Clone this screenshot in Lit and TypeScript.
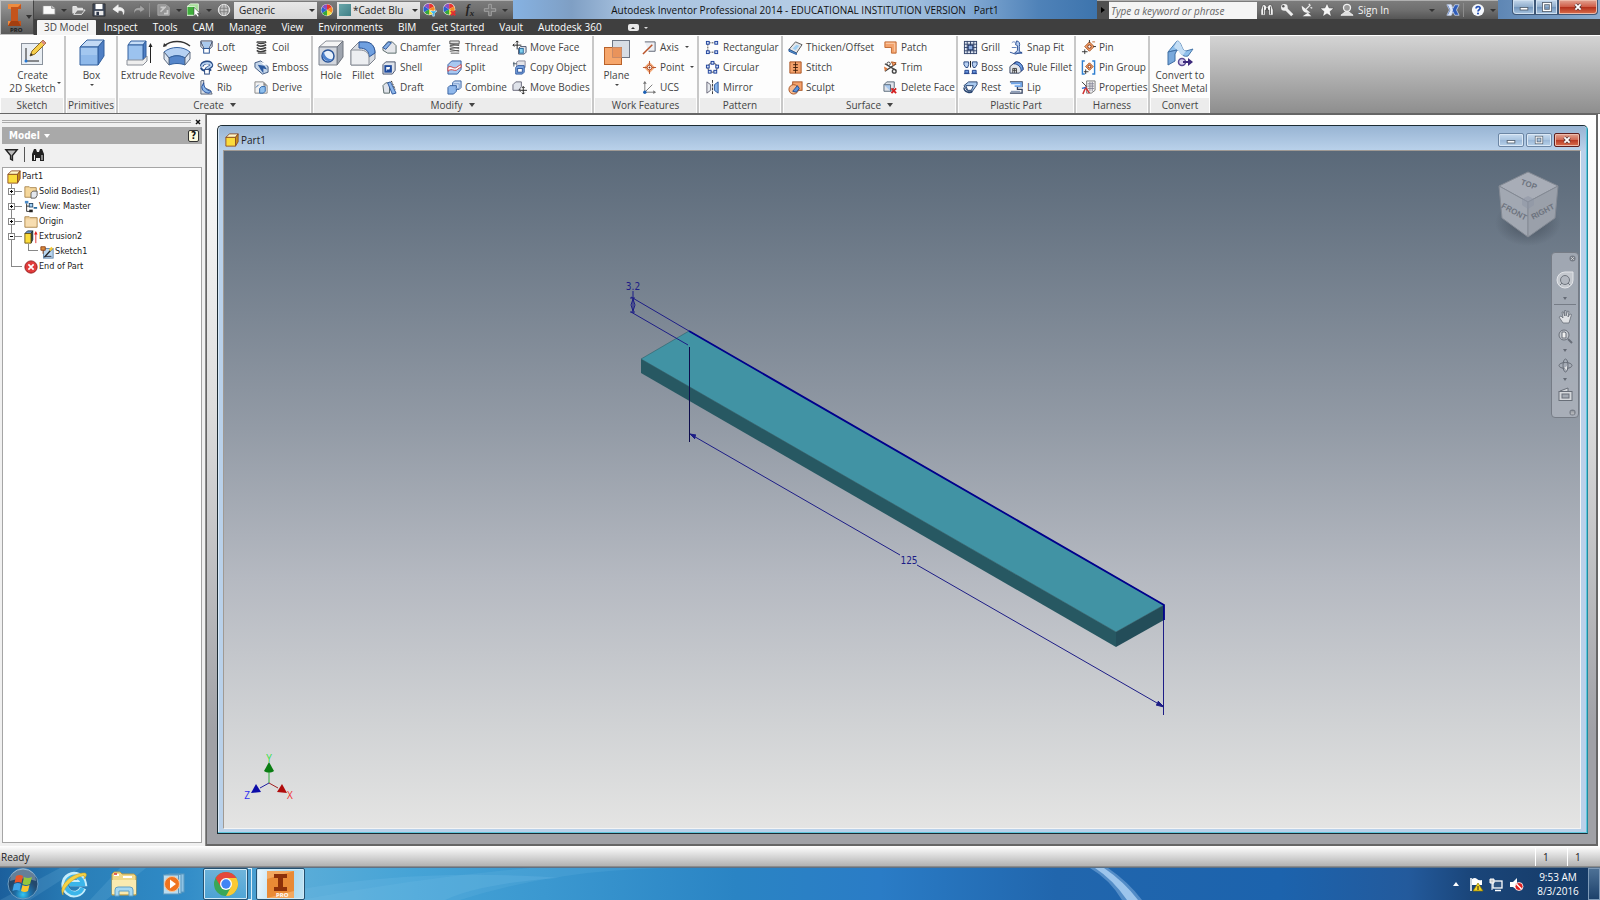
import { LitElement, html, svg, css, nothing, TemplateResult } from "lit";
import { customElement } from "lit/decorators.js";
import { classMap } from "lit/directives/class-map.js";

type Art = TemplateResult;

/* ---------- 16px ribbon glyphs ---------- */
const small: Record<string, Art> = {
  loft: svg`<path d="M2 1h12v6l-3 3H5L2 7z" fill="#e4e8ee" stroke="#33415f"/><path d="M2 2l4 8M14 2l-4 8" stroke="#33415f"/><path d="M3 2h10l-3 7H6z" fill="#a9c9ee"/><rect x="5" y="9" width="6" height="5" fill="#fff" stroke="#1f4b8e"/>`,
  sweep: svg`<path d="M3 7c0-5 9-6 10-2 1 3-5 3-5 5" fill="none" stroke="#274b86" stroke-width="4"/><path d="M3 7c0-4 8-5 10-2 1 2-5 3-5 5" fill="none" stroke="#b5d0f0" stroke-width="2"/><path d="M2 8c1 4 7 5 11 2" fill="none" stroke="#274b86" stroke-width="2"/><rect x="6" y="10" width="5" height="5" fill="#fff" stroke="#1f3f7a"/>`,
  rib: svg`<path d="M2 1l3-1v8l7 3 2 4H2z" fill="#d9dde4" stroke="#5a6478"/><path d="M5 3c0 5 3 8 8 9l-2 2c-5 0-8-3-8-7z" fill="#8db8ea" stroke="#1f4b9a"/>`,
  coil: svg`<g fill="none" stroke="#3f3f3f" stroke-width="1.8"><path d="M3 2c3 3 8 1 10 0M3 5c3 3 8 1 10 0M3 8c3 3 8 1 10 0M3 11c3 3 8 1 10 0"/><path d="M3 2h9M4 14h9" stroke="#777"/></g>`,
  emboss: svg`<path d="M1 3l6-2 8 6v6l-6 2-8-7z" fill="#c5d6ea" stroke="#3b557f"/><path d="M4 5l7 1 3 4-4-1v5L7 10z" fill="#2c5a9f"/><path d="M7 2l4 1 3 3-4-1z" fill="#fff"/>`,
  derive: svg`<path d="M1 2h9l4 4v8H1z" fill="#f1f1f1" stroke="#888"/><path d="M10 2l4 4h-4z" fill="#8a8a8a"/><path d="M6 9l2-2h4v5l-2 2H6z" fill="#8fc0ee" stroke="#2e64a6"/><path d="M2 8l3-3" stroke="#2e64a6"/>`,
  chamfer: svg`<path d="M1 8l5-6h5l4 4v8H6l-5-3z" fill="#e4e6ea" stroke="#566"/><path d="M1 8l6-6 3 1-6 7z" fill="#86b0e6" stroke="#2b549b"/>`,
  shell: svg`<path d="M1 5l3-3h10v9l-3 4H1z" fill="#dfe3ea" stroke="#45506a"/><rect x="3.5" y="6.5" width="6" height="6" fill="#fff" stroke="#1f4b9e" stroke-width="2"/><path d="M5 11h4V9" stroke="#1f4b9e" stroke-width="2" fill="none"/>`,
  draft: svg`<path d="M1 6l3-3h4v11H2z" fill="#dfe3ea" stroke="#566"/><path d="M6 3l3-1 6 12-4 1z" fill="#8bb5ea" stroke="#2b549b"/><path d="M10 1l4 9" stroke="#222" stroke-dasharray="2 1"/>`,
  thread: svg`<g stroke="#555" fill="none"><path d="M3 1h10v3H3z" fill="#ddd"/><path d="M3 4l10 2M3 7l10 2M3 10l10 2M3 6l10-1M3 9l10-1M3 12l10-1M4 14h9"/></g>`,
  split: svg`<path d="M1 5l4-4h10v9l-4 5H1z" fill="#a8c8f0" stroke="#2f5b9f"/><path d="M1 8c3-3 6 2 9 0s4-3 5-3v3c-3 0-4 4-7 3s-5-1-7 1z" fill="#fff" stroke="#d23c3c"/>`,
  combine: svg`<path d="M6 3l2-2h7v7l-2 2H6z" fill="#c9dcf5" stroke="#35609f"/><path d="M1 8l2-2h7v6l-3 3H1z" fill="#8fb8ec" stroke="#35609f"/><path d="M7 4h6v5H9" fill="none" stroke="#7d9fd0"/>`,
  moveface: svg`<path d="M5.5 1v9M1 5.5h9M4 2.5L5.5 1 7 2.5M2.5 4L1 5.5 2.5 7" stroke="#222" fill="none"/><path d="M7 9l2-2h6v6l-2 2H7z" fill="#e4e8ee" stroke="#45506a"/><rect x="8" y="9" width="4" height="5" fill="#7fd0ee" stroke="#2a6da0"/>`,
  copy: svg`<path d="M5 2l2-1h7v7l-2 1H5z" fill="#e4e4e8" stroke="#889"/><path d="M1 4h4M2 2v5" stroke="#456"/><path d="M4 8l2-2h7v7l-2 2H4z" fill="#7fa9e4" stroke="#2b549b"/><rect x="6" y="9" width="5" height="4" fill="#fff" stroke="#2b549b"/>`,
  movebody: svg`<path d="M1 5l3-3h6v5l-3 4H1z" fill="#dfe3ea" stroke="#667"/><path d="M12 7v8M8 11h8" stroke="#222"/><path d="M10.5 8.5L12 7l1.5 1.5M10.5 13.5L12 15l1.5-1.5M9 9.5L7.5 11 9 12.5" stroke="#222" fill="none"/>`,
  axis: svg`<path d="M3 2h11v10H7" fill="#eceff4" stroke="#5b6270"/><path d="M1 15L11 5" stroke="#b9542b" stroke-width="1.6"/>`,
  point: svg`<path d="M8 2l6 6-6 6-6-6z" fill="#f2a878"/><path d="M8 1v14M1 8h14" stroke="#b9542b"/><circle cx="8" cy="8" r="2.5" fill="#fff" stroke="#b9542b"/><circle cx="8" cy="8" r="1" fill="#7c2d10"/>`,
  ucs: svg`<path d="M3 13V2M3 13h11M3 13l8-8" stroke="#777" fill="none"/><path d="M1 4l2-3 2 3zM12 11l3 2-3 2z" fill="#777"/><circle cx="3" cy="13" r="1.8" fill="#1a5fb4"/>`,
  rect: svg`<path d="M4 3h8M4 13h8M3 4v8" stroke="#444" stroke-dasharray="2 1"/><g fill="#cfe0f8" stroke="#1c3f9a"><rect x="1.5" y="1.5" width="3" height="3"/><rect x="10.5" y="1.5" width="3" height="3"/><rect x="1.5" y="11.5" width="3" height="3"/><rect x="10.5" y="11.5" width="3" height="3"/></g>`,
  circ: svg`<circle cx="8" cy="8" r="5" fill="none" stroke="#333"/><g fill="#cfe0f8" stroke="#1c3f9a"><rect x="6.5" y="1.5" width="3" height="3"/><rect x="11.5" y="5.5" width="3" height="3"/><rect x="9.5" y="11" width="3" height="3"/><rect x="3.5" y="11" width="3" height="3"/><rect x="1.5" y="5.5" width="3" height="3"/></g>`,
  mirror: svg`<path d="M2 2l4 3v6l-4 3z" fill="#e6e9ee" stroke="#667"/><path d="M8 0v16" stroke="#333" stroke-dasharray="3 1"/><path d="M14 2l-4 3v6l4 3z" fill="#86b4ea" stroke="#2b549b"/>`,
  thicken: svg`<path d="M1 10l7-8 7 3-6 9z" fill="#e3e6ea" stroke="#555"/><path d="M1 10l8 4v1.5L1 12z" fill="#5da2e0" stroke="#27589a"/><path d="M5 9l4-4 3 1-4 5z" fill="#9fd0f4"/>`,
  stitch: svg`<path d="M2 2h12v12H2z" fill="#f3a26c" stroke="#a7511f"/><path d="M8 2v12" stroke="#5a2a0c"/><path d="M5.5 5h5M5.5 8h5M5.5 11h5" stroke="#3b1c08"/>`,
  sculpt: svg`<rect x="5" y="2" width="10" height="9" fill="#f3a26c" stroke="#a7511f"/><circle cx="6" cy="10" r="5" fill="#f7b98d" stroke="#a7511f"/><path d="M5 12l5-6 2 3-3 4z" fill="#5b93dc" stroke="#1f4b8e"/>`,
  patch: svg`<path d="M2 2h12v12H9V8H2z" fill="#f3a26c" stroke="#c06a33"/><path d="M3 3.5h9.5v9" fill="none" stroke="#fbd2b2"/>`,
  trim: svg`<path d="M2 4l12 7M2 12l12-8" stroke="#444" stroke-width="1.5"/><path d="M1 7l4 2-3 3z" fill="#e07b3d"/><circle cx="12" cy="12" r="2" fill="none" stroke="#444" stroke-width="1.5"/><circle cx="6" cy="4" r="1.8" fill="none" stroke="#444"/><path d="M9 2l5 1-3 3z" fill="#f3a26c" stroke="#a7511f"/>`,
  delface: svg`<path d="M1 5l3-3h8v6l-3 4H1z" fill="#dfe3ea" stroke="#567"/><path d="M1 5h7v7" fill="#a9c9ee" stroke="#567"/><path d="M9 9l5 5M14 9l-5 5" stroke="#d41f1f" stroke-width="2"/>`,
  grill: svg`<rect x="1.5" y="1.5" width="13" height="13" fill="#dfe6f2" stroke="#34466c"/><path d="M4.5 1v14M8 1v14M11.5 1v14M1 4.5h14M1 8h14M1 11.5h14" stroke="#34466c"/><rect x="5.5" y="5.5" width="5" height="5" fill="#8fb0e4" stroke="#182c5c"/>`,
  boss: svg`<path d="M1 2h5v3l-1 3H3L1 5zM10 2h5v3l-2 3h-2l-1-3z" fill="#b9d1f2" stroke="#25457f"/><path d="M8 1v7" stroke="#111"/><path d="M2 14v-3h4v3zM10 14v-3h4v3z" fill="#6f9ce0" stroke="#1f3f8a"/><path d="M1 14.5h6M9 14.5h6" stroke="#1f3f8a"/>`,
  rest: svg`<path d="M1 6l5-4h9v3l-5 7H5z" fill="#a9c9ee" stroke="#27436f"/><path d="M3 6h8l-2 5H5z" fill="#fff" stroke="#27436f"/><path d="M1 8c0 5 7 7 9 4" fill="none" stroke="#27436f" stroke-width="1.5"/>`,
  snap: svg`<path d="M8 1c3 0 4 3 3 6v5l3 2H6l3-3V6L7 5z" fill="#b5cdf0" stroke="#2b4f94"/><path d="M3 8h5M3 3c2-2 4-1 4 1" stroke="#5d7db8" fill="none"/><path d="M1 13l6 2 7-2" stroke="#2b4f94" fill="none"/>`,
  rulef: svg`<path d="M1 14V7l6-5c5 0 8 4 8 8l-4 4z" fill="#e3e6ea" stroke="#33415f"/><path d="M5 4l3-2c4 0 7 4 7 8l-2 2c0-4-3-8-8-8z" fill="#6f9fe0" stroke="#1f3f8a"/><path d="M4 14V9h4v5M6 9v5M4 11h4" stroke="#444" fill="none"/>`,
  lip: svg`<path d="M1 2h13v5H9v3h5v4H1" fill="none" stroke="#33415f" stroke-width="1.4"/><path d="M2 3.5h11v3H6" fill="none" stroke="#6fa4e6" stroke-width="2"/><path d="M2 12.5h10" stroke="#8b9bb5" stroke-width="2"/>`,
  pin: svg`<path d="M9 2l5 5-5 5-5-5z" fill="#f3a26c" stroke="#a7511f"/><circle cx="9" cy="7" r="1.8" fill="#fff" stroke="#7c2d10"/><path d="M9 0v3M13 7h3M4 10v5M1 12.5h6" stroke="#333"/><path d="M12 2h3" stroke="#c06a33"/>`,
  pingroup: svg`<path d="M4 1H1.5v14H4M12 1h2.5v14H12" fill="none" stroke="#2f7fd0" stroke-width="1.5"/><path d="M9 3l4 4-4 4-4-4z" fill="#f3a26c" stroke="#a7511f"/><circle cx="9" cy="7" r="1.4" fill="#fff" stroke="#7c2d10"/><path d="M5 10v5M3 12.5h5" stroke="#333"/>`,
  props: svg`<path d="M6 1h9v10l-4 3H6z" fill="#f4f4f4" stroke="#777"/><path d="M7 4h7M7 6.5h7M7 9h7M9.5 2v10M12 2v10" stroke="#889"/><path d="M1 2l5 5" stroke="#333"/><path d="M2 15l3-7 4 6" stroke="#d02f2f" stroke-width="1.6" fill="none"/><path d="M1 9l4-1" stroke="#2f6fd0" stroke-width="1.5"/>`,
};

/* ---------- 28px ribbon glyphs ---------- */
const large: Record<string, Art> = {
  sketch: svg`<rect x="2.5" y="4.5" width="21" height="21" fill="#e9eef3" stroke="#8a929c"/><path d="M7 9v13h13" fill="none" stroke="#222"/><circle cx="7" cy="22" r="1.5" fill="#2477d4"/><path d="M11 17l2-5L24 1l3 3-11 11z" fill="#f6cf4c" stroke="#8f6a1c"/><path d="M24 1l3 3-2 2-3-3z" fill="#d98a83"/><path d="M11 17l1-3 2 2z" fill="#333"/>`,
  box: svg`<path d="M2 8l7-7h17l-6 7z" fill="#c3daf5" stroke="#33619f"/><path d="M20 8l6-7v16l-6 9z" fill="#4f7fc4" stroke="#33619f"/><path d="M2 8h18v18H2z" fill="#8fb9ea" stroke="#33619f"/><path d="M3 9h16v7H3z" fill="#a3c7f0"/>`,
  extrude: svg`<path d="M3 6l3-4h15l-3 4z" fill="#c6ddf7" stroke="#33619f"/><path d="M18 6l3-4v17l-3 5z" fill="#4f7fc4" stroke="#33619f"/><path d="M3 6h15v16H3z" fill="#9cc3ef" stroke="#33619f"/><path d="M2 21h16l4-4v5l-4 4H2z" fill="#eee" stroke="#8a8f98"/><path d="M25.5 24V6" stroke="#222"/><path d="M23.5 8l2-4 2 4z" fill="#222"/>`,
  revolve: svg`<path d="M1 7C8 1 20 1 27 7" fill="none" stroke="#333" stroke-width="1.4"/><path d="M0 8l1-4 3 3z" fill="#333"/><path d="M1 13c7-6 19-6 26 0l-5 6c-5-3-11-3-16 0z" fill="#b5d1f3" stroke="#33619f"/><path d="M6 19c5-3 11-3 16 0v7c-5-2-11-2-16 0z" fill="#5586ca" stroke="#33619f"/><path d="M1 13l5 6v7l-5-6zM27 13l-5 6v7l5-6z" fill="#dfe7f1" stroke="#5f6d82"/>`,
  hole: svg`<path d="M2 8l7-6h17l-6 6z" fill="#f4f4f4" stroke="#8a8f98"/><path d="M20 8l6-6v16l-6 8z" fill="#9ea4ae" stroke="#6d727c"/><path d="M2 8h18v18H2z" fill="#d3d7de" stroke="#7b818c"/><circle cx="11" cy="17" r="6" fill="#e6f0fb" stroke="#2a5599" stroke-width="1.500"/><path d="M7 12a6 6 0 1 0 9 8c-5 1-9-3-9-8z" fill="#4d82ce"/>`,
  fillet: svg`<path d="M2 11l8-8h6c7 0 10 5 10 11v6l-6 6H2z" fill="#d9dce1" stroke="#7b818c"/><path d="M10 3h6c7 0 10 5 10 11l-6 4c0-6-3-9-10-9z" fill="#6fa0e0" stroke="#2a5599"/><path d="M2 11h8c7 0 10 3 10 8v7H2z" fill="#eceef1" stroke="#8a8f98"/>`,
  plane: svg`<rect x="9.5" y="1.5" width="17" height="17" fill="#d7dde5" stroke="#6d7685"/><rect x="1.5" y="8.5" width="17" height="17" fill="#f59a57" fill-opacity=".88" stroke="#b9622a"/><path d="M9.5 8.5h9v10h-9z" fill="#e9935b" stroke="#c98a67"/>`,
  convert: svg`<path d="M2 13L11 2c5 0 4 10 9 10l7-2-5 7c-7 2-7-6-11-6z" fill="#8fc0ec" stroke="#4a79ab"/><path d="M11 2c5 0 4 10 9 10l-3 4c-4-1-4-5-6-5l-3-3z" fill="#c4def5"/><path d="M2 13l9-2-2 4v7l-7 4z" fill="#79a9dc" stroke="#3f6ea3"/><circle cx="16" cy="23" r="3.5" fill="#d9d2ee" stroke="#5a4a94" stroke-width="1.5"/><path d="M17 23h6" stroke="#3d2b7c" stroke-width="2"/><path d="M22 19l5 4-5 4z" fill="#3d2b7c"/>`,
};

const wheel = svg`<circle cx="8" cy="8" r="7" fill="#eee"/><path d="M8 8V1.5a6.5 6.5 0 0 1 5.6 3.2z" fill="#e8342e"/><path d="M8 8l5.6-3.3a6.5 6.5 0 0 1 0 6.6z" fill="#f08c28"/><path d="M8 8l5.6 3.3A6.5 6.5 0 0 1 8 14.5z" fill="#f2e23a"/><path d="M8 8v6.5a6.5 6.5 0 0 1-5.6-3.2z" fill="#37a83c"/><path d="M8 8l-5.6 3.3a6.5 6.5 0 0 1 0-6.6z" fill="#2a62d0"/><path d="M8 8L2.4 4.7A6.5 6.5 0 0 1 8 1.5z" fill="#8b4fc0"/>`;

/* ---------- title-bar glyphs ---------- */
const bar: Record<string, Art> = {
  new: svg`<path d="M1 3h10l4 3v7H1z" fill="#fafafa" stroke="#777"/><path d="M11 3v3h4" fill="#ccc" stroke="#888"/>`,
  open: svg`<path d="M1 12V4h4l1 2h6v2" fill="#ddd" stroke="#eee"/><path d="M2 13l4-5h9l-4 5z" fill="#777" stroke="#f0f0f0"/>`,
  save: svg`<path d="M1 1h14v14H1z" fill="#3c4658" stroke="#333"/><path d="M4 1h8v6H4z" fill="#fff"/><path d="M3 9h10v5H3z" fill="#e8e8e8"/><path d="M5 10h3v4H5z" fill="#2c3648"/>`,
  undo: svg`<path d="M7 2L1 7l6 4V9c4-1 6 0 6 4 2-5 0-8-6-8z" fill="#f2f2f2" stroke="#f2f2f2" stroke-width=".8"/>`,
  redo: svg`<path d="M9 2l6 5-6 4V9c-4-1-6 0-6 4-2-5 0-8 6-8z" fill="#a4a4a4" stroke="#555" stroke-width=".5"/>`,
  update: svg`<path d="M1 2h9l4 3v9H1z" fill="#949494" stroke="#ababab"/><path d="M4 10l6-6M4 5h3v3M12 8v4H8" fill="none" stroke="#cacaca" stroke-width="2"/>`,
  select: svg`<path d="M0 4l4-3h9v8l-4 5H0z" fill="#a8e09a" stroke="#e4f6de"/><path d="M0 4h9v10H0z" fill="#3fae3c" stroke="#e4f6de"/><path d="M8 5v10l2-2 2 3 2-1-2-3h3z" fill="#fff" stroke="#333" stroke-width=".6"/>`,
  globe: svg`<circle cx="8" cy="8" r="6.5" fill="#c4c4c4" stroke="#f2f2f2"/><path d="M3 6h10M3 10h10M8 2v12M5 3c-2 3-2 7 0 10M11 3c2 3 2 7 0 10" stroke="#7d7d7d" fill="none"/>`,
  wheel,
  wheelAdd: svg`<g transform="translate(-1 -1)">${wheel}</g><path d="M8 9h8l-3 3v3h-2v-3z" fill="#35b2ea" stroke="#fff" stroke-width=".6"/>`,
  wheelDel: svg`<g transform="translate(-1 -1)">${wheel}</g><path d="M9 9l5 5M14 9l-5 5" stroke="#e03030" stroke-width="2.4"/>`,
  plus: svg`<path d="M6.5 1.5h3v5h5v3h-5v5h-3v-5h-5v-3h5z" fill="#777" stroke="#a8a8a8"/>`,
  binoc: svg`<path d="M1 8l2-6h3l1 2h2l1-2h3l2 6v6h-5V8H6v6H1z" fill="#f2f2f2" stroke="#333" stroke-width=".6"/><path d="M4 4v9M12 4v9" stroke="#555"/><path d="M7 5h2v3H7z" fill="#444"/>`,
  key: svg`<circle cx="5" cy="5" r="3.8" fill="#eee"/><path d="M6 6l8 8" stroke="#eee" stroke-width="3.5"/><circle cx="3.8" cy="3.8" r="1.4" fill="#555"/>`,
  dish: svg`<path d="M2 3c0 7 4 9 10 8z" fill="#f2f2f2"/><path d="M6 8l5-5M12 5l2 1M10 1l2 2" stroke="#eee" stroke-width="1.5"/><path d="M3 15h10l-4-4z" fill="#f2f2f2"/>`,
  star: svg`<path d="M8 0l2.300 5.500L16 6l-4.500 3.700L13 15.500l-5-3.200-5 3.200 1.500-5.800L0 6l5.700-.5z" fill="#f5f5f5" stroke="#444" stroke-width=".6"/>`,
  person: svg`<circle cx="8" cy="5.5" r="4" fill="#999" stroke="#f2f2f2" stroke-width="1.5"/><path d="M1 14h14l-5-4H6z" fill="#ddd" stroke="#f2f2f2"/>`,
  exchange: svg`<path d="M1 2h5l2 4 2-4h5l-3 6 3 6h-5l-2-4-2 4H1l3-6z" fill="#2f5cb8" stroke="#dfe8f8" stroke-width=".8"/><path d="M2 2h4l2 6-2 6H2l3-6z" fill="#dfe8f8"/>`,
  help: svg`<circle cx="8" cy="8" r="7" fill="#f6f8fb"/><path d="M5.8 6.3c0-3 4.6-3 4.6-.3C10.4 7.7 8 7.6 8 9.6" fill="none" stroke="#2450b5" stroke-width="2"/><circle cx="8" cy="12" r="1.2" fill="#2450b5"/>`,
};

/* ---------- browser tree glyphs ---------- */
const tree: Record<string, Art> = {
  part: svg`<path d="M1 5l4-4h10l-3 4z" fill="#fff6c8" stroke="#8a4a22"/><path d="M12 5l3-4v9l-3 5z" fill="#c98f1a" stroke="#8a4a22"/><path d="M1 5h11v10H1z" fill="#fbdc3c" stroke="#8a4a22"/>`,
  bodies: svg`<path d="M1 2h5l1 1h7v11H1z" fill="#f5d79b" stroke="#a88349"/><path d="M8 9l2-2h5v5l-2 3H8z" fill="#e4e8ee" stroke="#555"/>`,
  view: svg`<rect x="1" y="1" width="4" height="3" fill="#4a8bc8"/><path d="M3 4v9h5M3 7h4" stroke="#222" fill="none"/><rect x="6" y="4" width="4" height="4" fill="#9fd0f4" stroke="#246"/><rect x="6" y="11" width="4" height="3" fill="#222"/><path d="M11 9h4" stroke="#2a6da0" stroke-width="2"/>`,
  folder: svg`<path d="M1 2h5l1 1h8v11H1z" fill="#f0d09a" stroke="#a88349"/><path d="M2 5h12v8H2z" fill="#f7ddb0"/>`,
  extrusion: svg`<path d="M1 4l3-3h6l-2 3z" fill="#6d95c4" stroke="#234"/><path d="M8 4l2-3v10l-2 4z" fill="#245" stroke="#233"/><path d="M1 4h7v11H1z" fill="#fbdc3c" stroke="#6b5410"/><path d="M13.5 15V3" stroke="#d22"/><path d="M11.5 5l2-4 2 4z" fill="#d22"/>`,
  sketch: svg`<rect x="4" y="4" width="11" height="11" fill="#b9d6f0" stroke="#5d82a8"/><path d="M5 14L14 4" stroke="#222" stroke-width="1.5"/><path d="M1 2h5v4H1zM3.5 6v4" fill="#d98b3c" stroke="#8a3d12"/><path d="M10 5l3-3 2 2-3 3z" fill="#f2c93a"/><path d="M6 13h7" stroke="#223"/>`,
  end: svg`<circle cx="8" cy="8" r="7" fill="#e23b3b" stroke="#8f1717"/><path d="M5 5l6 6M11 5l-6 6" stroke="#fff" stroke-width="2"/>`,
  filter: svg`<path d="M2 3h12l-5 6v5l-2-1V9z" fill="#bbb" stroke="#222" stroke-width="1.5"/>`,
  binoc: svg`<path d="M2 7l2-5h2l1 3h2l1-3h2l2 5v7h-4v-3H6v3H2z" fill="#222"/><path d="M4.5 8v5M12 8v5" stroke="#eee"/>`,
};

const icon = (body: Art, size: number, box = size) =>
  html`<svg class="ic" width=${size} height=${size} viewBox="0 0 ${box} ${box}" aria-hidden="true">${body}</svg>`;

interface Big { art: string; text: string[]; caret?: "below" | "side" }
interface Small { art: string; text: string; caret?: boolean }
interface Panel { id: string; title: string; more?: boolean; bigs?: Big[]; cols?: Small[][] }

const s = (art: string, text: string, caret = false): Small => ({ art, text, caret });

const panels: Panel[] = [
  { id: "sketch", title: "Sketch", bigs: [{ art: "sketch", text: ["Create", "2D Sketch"], caret: "side" }] },
  { id: "prim", title: "Primitives", bigs: [{ art: "box", text: ["Box"], caret: "below" }] },
  { id: "create", title: "Create", more: true, bigs: [{ art: "extrude", text: ["Extrude"] }, { art: "revolve", text: ["Revolve"] }],
    cols: [[s("loft", "Loft"), s("sweep", "Sweep"), s("rib", "Rib")], [s("coil", "Coil"), s("emboss", "Emboss"), s("derive", "Derive")]] },
  { id: "modify", title: "Modify", more: true, bigs: [{ art: "hole", text: ["Hole"] }, { art: "fillet", text: ["Fillet"] }],
    cols: [[s("chamfer", "Chamfer"), s("shell", "Shell"), s("draft", "Draft")], [s("thread", "Thread"), s("split", "Split"), s("combine", "Combine")],
      [s("moveface", "Move Face"), s("copy", "Copy Object"), s("movebody", "Move Bodies")]] },
  { id: "work", title: "Work Features", bigs: [{ art: "plane", text: ["Plane"], caret: "below" }],
    cols: [[s("axis", "Axis", true), s("point", "Point", true), s("ucs", "UCS")]] },
  { id: "pattern", title: "Pattern", cols: [[s("rect", "Rectangular"), s("circ", "Circular"), s("mirror", "Mirror")]] },
  { id: "surface", title: "Surface", more: true, cols: [[s("thicken", "Thicken/Offset"), s("stitch", "Stitch"), s("sculpt", "Sculpt")],
    [s("patch", "Patch"), s("trim", "Trim"), s("delface", "Delete Face")]] },
  { id: "plastic", title: "Plastic Part", cols: [[s("grill", "Grill"), s("boss", "Boss"), s("rest", "Rest")],
    [s("snap", "Snap Fit"), s("rulef", "Rule Fillet"), s("lip", "Lip")]] },
  { id: "harness", title: "Harness", cols: [[s("pin", "Pin"), s("pingroup", "Pin Group"), s("props", "Properties")]] },
  { id: "convert", title: "Convert", bigs: [{ art: "convert", text: ["Convert to", "Sheet Metal"] }] },
];

const tabs = ["3D Model", "Inspect", "Tools", "CAM", "Manage", "View", "Environments", "BIM", "Get Started", "Vault", "Autodesk 360"];

const minGlyph = svg`<rect x="2.5" y="7.5" width="9" height="3" fill="#fff" stroke="#53606f"/>`;
const maxGlyph = svg`<rect x="3" y="3" width="8" height="8" fill="none" stroke="#53606f" stroke-width="3.6"/><rect x="3" y="3" width="8" height="8" fill="none" stroke="#fff" stroke-width="1.6"/>`;
const closeGlyph = svg`<path d="M4 4l6 6M10 4l-6 6" stroke="#5b3a3a" stroke-width="4"/><path d="M4 4l6 6M10 4l-6 6" stroke="#fff" stroke-width="2.2"/>`;

@customElement("ribbon-bar")
export class RibbonBar extends LitElement {
  static styles = css`
    :host { display: flex; height: 79px; background: linear-gradient(#d4d4d4, #8e8e8e); border-top: 1px solid #fff; border-bottom: 1px solid #666;
      font: 10px/13px "Open Sans", "Noto Sans", sans-serif; color: #444; box-sizing: border-box; }
    button { font: inherit; color: inherit; border: 0; background: none; padding: 0; white-space: nowrap; }
    .panel { display: flex; flex-direction: column; box-sizing: border-box; background: #fdfdfd; border-right: 2px solid #c8c8c8; flex: none; }
    .body { flex: 1; display: flex; padding-left: 2px; }
    .foot { height: 15px; margin: 0 1px; background: #ececec; display: flex; align-items: center; justify-content: center; gap: 6px; box-sizing: border-box; padding-bottom: 1px; }
    .caret { display: inline-block; border: 3px solid transparent; border-top: 4px solid #444; border-bottom: 0; }
    .tiny { border-width: 2px; border-bottom: 0; }
    .big { display: flex; flex-direction: column; align-items: center; padding-top: 3px; position: relative; flex: none; }
    .big .ic { margin-bottom: 2px; }
    .below { margin-top: 2px; }
    .side { position: absolute; right: 2px; bottom: 14px; }
    .col { display: grid; grid-template-rows: repeat(3, 20px); flex: none; padding-top: 1px; }
    .item { display: flex; align-items: center; gap: 3px; text-align: left; }
    .item .caret { margin-left: 3px; }
    .ic { display: block; flex: none; }
    .sketch { width: 66px; } .sketch .big { width: 61px; }
    .prim { width: 52px; } .prim .big { width: 47px; }
    .create { width: 195px; } .create .big { width: 38px; } .create .col { width: 52px; margin-left: 3px; }
    .modify { width: 281px; } .modify .big { width: 32px; } .modify .col { width: 62px; margin-left: 3px; }
    .work { width: 105px; } .work .big { width: 38px; padding-left: 3px; } .work .col { margin-left: 8px; }
    .pattern { width: 84px; } .pattern .body { padding-left: 6px; }
    .surface { width: 175px; } .surface .body { padding-left: 5px; } .surface .col { width: 95px; }
    .plastic { width: 118px; } .plastic .body { padding-left: 5px; } .plastic .col { width: 46px; }
    .harness { width: 74px; } .harness .body { padding-left: 5px; }
    .convert { width: 60px; border-right: 0; } .convert .body { padding: 0; } .convert .big { width: 60px; }
  `;
  private big(b: Big) {
    return html`<button class="big">${icon(large[b.art], 28)}${b.text.map((t) => html`<span>${t}</span>`)}
      ${b.caret ? html`<i class="caret tiny ${b.caret}"></i>` : nothing}</button>`;
  }
  render() {
    return panels.map((p) => html`<section class="panel ${p.id}" aria-label=${p.title}>
      <div class="body">
        ${(p.bigs ?? []).map((b) => this.big(b))}
        ${(p.cols ?? []).map((c) => html`<div class="col">${c.map((i) => html`<button class="item">${icon(small[i.art], 15, 16)}<span>${i.text}</span>${i.caret ? html`<i class="caret tiny"></i>` : nothing}</button>`)}</div>`)}
      </div>
      <div class="foot"><span>${p.title}</span>${p.more ? html`<i class="caret"></i>` : nothing}</div>
    </section>`);
  }
}

@customElement("app-header")
export class AppHeader extends LitElement {
  static styles = css`
    :host { display: grid; grid-template-columns: 34px minmax(0, 1fr); grid-template-rows: 19px 16px; background: #3f3f3f; font: 10px/14px "Open Sans", "Noto Sans", sans-serif; color: #222; }
    button { font: inherit; color: inherit; border: 0; background: none; padding: 0; }
    .ic { display: block; }
    .logo { grid-row: 1 / 3; background: linear-gradient(#9a9a9a, #5a5a5a); border: 1px solid #c2c2c2; border-right-color: #444; }
    .logo svg { display: block; }
    .top { display: flex; background: linear-gradient(#98b8da, #6c9acb 50%, #7ba3ce); min-width: 0; }
    .quick, .info { display: flex; align-items: center; background: linear-gradient(#7c7c7c, #6f6f6f 50%, #555); border-top: 1px solid #b0b0b0; box-sizing: border-box; flex: none; }
    .quick { padding-left: 5px; width: 479px; }
    .b { width: 20px; display: flex; justify-content: center; flex: none; }
    .c { width: 10px; display: flex; justify-content: center; flex: none; }
    .caret { border: 3px solid transparent; border-top-color: #333; border-bottom: 0; }
    .sep { width: 5px; height: 14px; border-left: 1px solid #8c8c8c; box-sizing: border-box; flex: none; }
    .combo { display: flex; width: 83px; height: 17px; background: linear-gradient(#e8e8e8, #d6d6d6); align-items: center; box-sizing: border-box; flex: none; position: relative; }
    .combo select { appearance: none; border: 0; background: none; font: inherit; color: #222; width: 100%; padding: 0 12px 0 5px; height: 16px; }
    .combo .caret { position: absolute; right: 2px; }
    .swatch { width: 12px; height: 12px; margin-left: 2px; background: linear-gradient(135deg, #6aa7aa, #3f7f86); flex: none; }
    .swatch + select { padding: 0 8px 0 2px; }
    .fx { font: italic bold 12px/14px "Liberation Serif", serif; color: #222; }
    .fx sub { font-size: 9px; line-height: 1; }
    .title { flex: 1; min-width: 0; display: flex; justify-content: center; align-items: center; gap: 8px; white-space: nowrap; overflow: hidden; color: #111;
      background: linear-gradient(90deg, #86b2e2, #7f9fc4 10%, #a9c3e0 20%, #b9cfe6 60%, #83aad4 78%, #4f82b8 90%, #3d74ad); }
    .info { width: 401px; color: #f4f4f4; }
    .go { width: 12px; height: 18px; background: #4f4f4f; display: flex; align-items: center; justify-content: center; flex: none; }
    .go i { border: 3px solid transparent; border-left: 4px solid #000; border-right: 0; }
    .info input { width: 148px; height: 17px; box-sizing: border-box; border: 0; background: #f4f4f4; padding: 2px 2px 0; font: italic 10px/14px "Open Sans", sans-serif; }
    .info input::placeholder { color: #666; opacity: 1; }
    .sign { flex: 1; text-align: left; padding: 0 8px 0 1px; display: flex; align-items: center; justify-content: space-between; }
    .win { display: flex; width: 102px; justify-content: flex-end; padding-right: 2px; background: linear-gradient(90deg, #5e86b4, #8badd0); box-sizing: border-box; }
    .win button { height: 15px; display: flex; align-items: center; justify-content: center; border: 1px solid #3f5878; border-top: 0; background: linear-gradient(#c5d8ec, #8eaccb 50%, #7396bd 52%, #a8c4df); box-shadow: inset 0 0 0 1px #cfe0f0; width: 23px; box-sizing: border-box; }
    .win button:first-child { border-radius: 0 0 0 4px; }
    .win button.x { width: 40px; border-radius: 0 0 4px 0; background: linear-gradient(#e2a493, #cf5b45 50%, #b3301a 52%, #d9704f); box-shadow: inset 0 0 0 1px #eba; }
    .tabs { display: flex; align-items: flex-end; padding-left: 3px; font-weight: 500; color: #fff; }
    .tab { height: 15px; padding: 0 7px 0 8px; line-height: 13px; white-space: nowrap; }
    .tab.on { background: #f4f4f4; color: #444; border-radius: 1px 1px 0 0; font-weight: 400; padding: 0 7px; }
    .min { margin: 0 0 4px 19px; width: 11px; height: 7px; background: #e8e8e8; border-radius: 2px; display: flex; align-items: center; justify-content: center; }
    .min i { border: 2px solid transparent; border-bottom-color: #333; border-top: 0; }
    .tabs > .caret { border-width: 2px; border-top-color: #ddd; border-bottom: 0; margin: 0 0 6px 5px; }
  `;
  private b(name: string, label: string) {
    return html`<button class="b" aria-label=${label}>${icon(bar[name], 14, 16)}</button>`;
  }
  private c(label: string) {
    return html`<button class="c" aria-label=${label}><i class="caret"></i></button>`;
  }
  render() {
    return html`
      <button class="logo" aria-label="Application menu">
        <svg width="32" height="33" viewBox="0 0 32 33"><path d="M7 3h13v5h-3v12h3v5H7v-5h3V8H7z" fill="#c4541c"/><path d="M7 3h13l-3 3H10v14l-3 5v-5h3V8H7z" fill="#ee8b3f"/><path d="M10 20h7l3 5H7z" fill="#a33f10"/>
          <text x="9" y="31" font-family="Open Sans, sans-serif" font-size="6" font-weight="700" fill="#1a1a1a">PRO</text><path d="M25 14h6l-3 4z" fill="#333"/></svg>
      </button>
      <div class="top">
        <div class="quick">
          ${this.b("new", "New")}${this.c("New options")}${this.b("open", "Open")}${this.b("save", "Save")}${this.b("undo", "Undo")}${this.b("redo", "Redo")}
          <span class="sep"></span>${this.b("update", "Update")}${this.c("Update options")}${this.b("select", "Select")}${this.c("Select options")}${this.b("globe", "Material browser")}
          <label class="combo"><select aria-label="Material"><option>Generic</option></select><i class="caret"></i></label>
          ${this.b("wheel", "Appearance browser")}
          <label class="combo"><span class="swatch"></span><select aria-label="Appearance"><option>*Cadet Blu</option></select><i class="caret"></i></label>
          ${this.b("wheelAdd", "Adjust appearance")}${this.b("wheelDel", "Clear appearance")}
          <button class="b fx" aria-label="Parameters"><span>f<sub>x</sub></span></button>${this.b("plus", "Add")}${this.c("Customize")}
        </div>
        <div class="title"><span>Autodesk Inventor Professional 2014 - EDUCATIONAL INSTITUTION VERSION</span><span>Part1</span></div>
        <div class="info">
          <button class="go" aria-label="Collapse search"><i></i></button>
          <input type="text" aria-label="Search help" placeholder="Type a keyword or phrase" />
          ${this.b("binoc", "Search")}${this.b("key", "Subscription")}${this.b("dish", "Communication")}${this.b("star", "Favorites")}${this.b("person", "Account")}
          <button class="sign">Sign In <i class="caret"></i></button>
          ${this.b("exchange", "Exchange apps")}<span class="sep"></span>${this.b("help", "Help")}${this.c("Help options")}
        </div>
        <div class="win">
          <button aria-label="Minimize">${icon(minGlyph, 12, 14)}</button><button aria-label="Restore">${icon(maxGlyph, 12, 14)}</button><button class="x" aria-label="Close">${icon(closeGlyph, 12, 14)}</button>
        </div>
      </div>
      <nav class="tabs">
        ${tabs.map((t, i) => html`<button class=${classMap({ tab: true, on: i === 0 })}>${t}</button>`)}
        <button class="min" aria-label="Minimize ribbon"><i></i></button><i class="caret"></i>
      </nav>`;
  }
}

@customElement("model-browser")
export class ModelBrowser extends LitElement {
  static styles = css`
    :host { display: flex; flex-direction: column; width: 206px; flex: none; box-sizing: border-box; padding: 2px 3px 3px 2px; background: #f0f0f0; border-right: 1px solid #8c8c8c;
      font: 10px/15px "DejaVu Sans Condensed", "DejaVu Sans", sans-serif; color: #222; }
    button { font: inherit; color: inherit; border: 0; background: none; padding: 0; display: flex; align-items: center; }
    .ic { display: block; flex: none; }
    .grip { display: flex; align-items: center; gap: 3px; height: 11px; }
    .grip span { flex: 1; height: 1px; border-top: 1px solid #aaa; border-bottom: 1px solid #aaa; }
    .head { height: 17px; background: #a9a9a9; display: flex; justify-content: space-between; align-items: center; color: #fff; font-weight: 700; padding: 0 3px 0 7px; flex: none; }
    .head button { gap: 4px; font-weight: 700; }
    .caret { border: 3px solid transparent; border-top: 4px solid #fff; border-bottom: 0; }
    .head .q { width: 11px; height: 12px; background: #fdfbe0; border: 1px solid #333; box-sizing: border-box; justify-content: center; color: #111; border-radius: 2px; }
    .tools { height: 21px; display: flex; align-items: center; gap: 5px; padding-left: 2px; flex: none; }
    .tools span { height: 15px; border-left: 1px solid #555; }
    .box { flex: 1; background: #fff; border: 1px solid #a5a5a5; padding: 1px 0 0 4px; margin-top: 2px; font-size: 9px; }
    ul { list-style: none; margin: 0; padding: 0; }
    .row { display: flex; align-items: center; height: 15px; gap: 1px; white-space: nowrap; }
    .root > ul > li { display: grid; grid-template-columns: 17px 1fr; }
    .rail { background: linear-gradient(#888, #888) 4px 0 / 1px 100% no-repeat, linear-gradient(#888, #888) 4px 7px / 11px 1px no-repeat; }
    .rail.last { background: linear-gradient(#888, #888) 4px 0 / 1px 8px no-repeat, linear-gradient(#888, #888) 4px 7px / 11px 1px no-repeat; }
    .rail button { width: 7px; height: 7px; margin: 4px 0 0 1px; border: 1px solid #888; box-sizing: border-box;
      background: linear-gradient(#000, #000) center / 3px 1px no-repeat, linear-gradient(#000, #000) center / 1px 3px no-repeat, #fff; }
    .rail button.open { background: linear-gradient(#000, #000) center / 3px 1px no-repeat, #fff; }
    .kid { display: grid; grid-template-columns: 16px 1fr; }
    .elbow { width: 10px; height: 7px; margin-left: 4px; border-left: 1px solid #888; border-bottom: 1px solid #888; box-sizing: border-box; }
  `;
  render() {
    const rows: [string, string, "plus" | "minus" | "none"][] = [
      ["bodies", "Solid Bodies(1)", "plus"], ["view", "View: Master", "plus"], ["folder", "Origin", "plus"],
      ["extrusion", "Extrusion2", "minus"], ["end", "End of Part", "none"]];
    return html`
      <div class="grip"><span></span><button aria-label="Close panel"><svg class="ic" width="8" height="8" viewBox="0 0 8 8"><path d="M2 2l4 4M6 2L2 6" stroke="#111" stroke-width="1.5"/></svg></button></div>
      <div class="head"><button>Model<i class="caret"></i></button><button class="q" aria-label="Help">?</button></div>
      <div class="tools"><button aria-label="Filter">${icon(tree.filter, 15, 16)}</button><span></span><button aria-label="Find">${icon(tree.binoc, 16)}</button></div>
      <div class="box root">
        <div class="row">${icon(tree.part, 14, 16)}Part1</div>
        <ul>${rows.map(([art, text, box]) => html`<li>
          <div class="rail ${box === "none" ? "last" : ""}">${box === "none" ? nothing : html`<button class=${box === "minus" ? "open" : ""} aria-label="Toggle ${text}"></button>`}</div>
          <div><div class="row">${icon(tree[art], 14, 16)}${text}</div>
          ${box === "minus" ? html`<div class="kid"><i class="elbow"></i><div class="row">${icon(tree.sketch, 14, 16)}Sketch1</div></div>` : nothing}</div>
        </li>`)}</ul>
      </div>`;
  }
}

@customElement("part-window")
export class PartWindow extends LitElement {
  static styles = css`
    :host { display: flex; flex: 1; min-width: 0; box-sizing: border-box; padding: 10px 8px 10px 10px; background: linear-gradient(#fff, #ddd 40%, #a0a1a6 85%); border: solid #666; border-width: 1px 2px 2px 1px; margin-right: 2px;
      font: 10px/14px "Open Sans", "Noto Sans", sans-serif; }
    button { border: 0; background: none; padding: 0; display: flex; align-items: center; justify-content: center; }
    .ic { display: block; }
    .win { flex: 1; min-width: 0; display: flex; flex-direction: column; background: #b9d1ea; border: 1px solid #1c2b33; border-right-color: #1f8ba0; border-radius: 5px 5px 0 0; box-shadow: inset -1px -1px 0 #5fc6dc, inset 1px 1px 0 #d8e8f6; padding: 0 6px 4px 5px; }
    .bar { height: 24px; box-sizing: border-box; display: flex; align-items: center; gap: 2px; background: linear-gradient(#98b4d3, #b9d1ea); margin: 0 -5px 0 -4px; padding: 3px 6px 0 6px; border-radius: 4px 4px 0 0; color: #222; flex: none; }
    .bar span { flex: 1; }
    .bar button { width: 26px; height: 14px; border: 1px solid #6c86a4; border-radius: 2px; background: linear-gradient(#c9dcf0, #a9c4e0 50%, #9bb8d8 52%, #b8d2ea); box-shadow: inset 0 0 0 1px #dce9f6; box-sizing: border-box; }
    .bar button.x { border-color: #5e1f1f; background: linear-gradient(#e2a493, #cf6650 50%, #b93a24 52%, #d9704f); box-shadow: inset 0 0 0 1px #eba; }
    .view { flex: 1; min-height: 0; position: relative; border: 1px solid #a09a94; border-right-color: #f4f4f4; border-bottom-color: #f4f4f4;
      background: linear-gradient(#5a6979, #939ba6 41%, #b5b9c1 63%, #d1d3d5 85%, #e4e4e3); overflow: hidden; }
    .scene { display: block; position: absolute; inset: 0; width: 100%; height: 100%; }
    .cube { position: absolute; top: 16px; right: 18px; }
    .nav { position: absolute; top: 101px; right: 1px; width: 28px; height: 166px; box-sizing: border-box; border: 1px solid #767c86; border-radius: 4px; background: rgba(176, 182, 191, .75); display: flex; flex-direction: column; align-items: center; }
    .nav .end { align-self: flex-end; padding: 2px 2px 0 0; }
    .nav i { border: 2px solid transparent; border-top: 3px solid #656b75; border-bottom: 0; }
    .nav hr { width: 22px; border: 0; border-top: 1px solid #767c86; margin: 4px 0; }
    .w { margin: 9px 0 8px; } .z { margin: 5px 0; } .o { margin: 6px 0 5px; } .l { margin: 6px 0 5px; }
  `;
  render() {
    return html`<div class="win">
      <div class="bar">${icon(tree.part, 14, 16)}<span>Part1</span>
        <button aria-label="Minimize document">${icon(minGlyph, 12, 14)}</button><button aria-label="Maximize document">${icon(maxGlyph, 10, 14)}</button><button class="x" aria-label="Close document">${icon(closeGlyph, 12, 14)}</button></div>
      <div class="view">
        <svg class="scene" viewBox="224 151 1356 677" role="img" aria-label="Part model">
          <path d="M641 359L689 331L1164 605L1116 632z" fill="#4193a4" stroke="#2c5f6a" stroke-width=".6"/>
          <path d="M641 359L1116 632v15L641 373z" fill="#275862"/>
          <path d="M1116 632L1164 605v15L1116 647z" fill="#234d59"/>
          <path d="M689 331L1164 605v15" fill="none" stroke="#00008c" stroke-width="1.8"/>
          <g stroke="#1d1d86" fill="none" stroke-width="1">
            <path d="M631 297L689 331M631 312L688 345M633 291v22"/><path d="M689.5 347v95" stroke="#0d0d4c"/><path d="M1163.5 620v95"/>
            <path d="M690 434L900 555M917 565L1164 707"/><path d="M696 435l-6-1 5 5M1156 705l8 2-6-6" fill="#1d1d86"/><path d="M630 298h5M630 312h5M631 305l2-6 2 6-2 6z"/>
          </g>
          <g font-family="DejaVu Sans Condensed, DejaVu Sans, sans-serif" font-size="10" fill="#1d1d86" text-anchor="middle"><text x="633" y="290">3.2</text><text x="909" y="564">125</text></g>
          <path d="M269 783V772" stroke="#2fae3c"/><path d="M269 783l9 5" stroke="#a02020"/><path d="M269 783l-9 5" stroke="#2020a0"/>
          <path d="M269 762l5 9c-3 2-7 2-10 0z" fill="#0a7d12"/><path d="M287 793l-10-1 5-8z" fill="#b00b0b"/><path d="M251 793l10-1-5-8z" fill="#0b0ba8"/>
          <g font-family="Open Sans, sans-serif" font-size="10" text-anchor="middle"><text x="269" y="762" fill="#35e045">Y</text><text x="290" y="799" fill="#f03030">X</text><text x="247" y="799" fill="#3030f0">Z</text></g>
        </svg>
        <svg class="cube" width="68" height="80" viewBox="1494 168 68 80" role="img" aria-label="View cube">
          <defs><radialGradient id="sh"><stop offset="0" stop-color="#3e4854" stop-opacity=".8"/><stop offset="1" stop-color="#3e4854" stop-opacity="0"/></radialGradient></defs>
          <ellipse cx="1528" cy="224" rx="33" ry="23" fill="url(#sh)"/>
          <g stroke="#848a94" stroke-width="1"><path d="M1528 173l30 14-30 16-29-16z" fill="#a8adb7"/><path d="M1499 187l29 16v35l-26-19z" fill="#a2a8b2"/><path d="M1558 187l-30 16v35l27-19z" fill="#9aa0aa"/></g>
          <path d="M1528 197l6 3v6l-6 4-6-4v-6z" fill="#8b93a3" opacity=".5"/>
          <g font-family="Liberation Sans, sans-serif" font-size="8" font-weight="700" fill="#6e747f" text-anchor="middle">
            <text transform="translate(1528 188) rotate(20)">TOP</text><text transform="translate(1513 215) rotate(28)">FRONT</text><text transform="translate(1544 215) rotate(-28)">RIGHT</text></g>
        </svg>
        <div class="nav">
          <button class="end" aria-label="Close navigation bar"><svg class="ic" width="7" height="7" viewBox="0 0 8 8"><circle cx="4" cy="4" r="3.5" fill="#777d87"/><path d="M2.5 2.5l3 3M5.5 2.5l-3 3" stroke="#ddd"/></svg></button>
          <button class="w" aria-label="Steering wheel"><svg class="ic" width="18" height="18" viewBox="0 0 18 18"><path d="M9 1h8v8a8 8 0 1 1-8-8z" fill="#c4c8ce" stroke="#e2e4e8"/><circle cx="9" cy="9" r="4.5" fill="#b3b8c0" stroke="#70767f"/><path d="M4 14l2-2M14 14l-2-2" stroke="#70767f"/></svg></button>
          <i></i><hr />
          <button aria-label="Pan"><svg class="ic" width="15" height="15" viewBox="0 0 15 15"><path d="M5 14L1 8l2-1 2 2-1-6h1.5l1 4V1.5H8V7l1.5-5 1.5.5L10 8l2-3 1.5.5L11 14z" fill="#dfe1e4" stroke="#686e78" stroke-width=".8"/></svg></button>
          <button class="z" aria-label="Zoom"><svg class="ic" width="15" height="15" viewBox="0 0 15 15"><circle cx="6" cy="6" r="5" fill="#c6cad0" stroke="#686e78"/><path d="M4 3h3l1 1v5H4z" fill="#eee" stroke="#686e78"/><path d="M10 10l4 4" stroke="#686e78" stroke-width="2"/></svg></button>
          <i></i>
          <button class="o" aria-label="Orbit"><svg class="ic" width="15" height="15" viewBox="0 0 15 15"><ellipse cx="7.5" cy="7.5" rx="6.5" ry="3" fill="none" stroke="#686e78"/><ellipse cx="7.5" cy="7.5" rx="2.5" ry="6.5" fill="none" stroke="#686e78"/><path d="M6 10l3-2v4z" fill="#e4e6e8"/></svg></button>
          <i></i>
          <button class="l" aria-label="Look at"><svg class="ic" width="15" height="15" viewBox="0 0 15 15"><path d="M2 4l8-3v3" fill="#d4d7db" stroke="#686e78"/><rect x="1" y="4.5" width="13" height="9" fill="#d4d7db" stroke="#686e78"/><rect x="4" y="7" width="7" height="4" fill="#a3a9b2" stroke="#686e78"/></svg></button>
          <button class="end" aria-label="Customize navigation bar"><svg class="ic" width="7" height="7" viewBox="0 0 8 8"><circle cx="4" cy="4" r="3.5" fill="#777d87"/><path d="M2 3.5h4M2 5.5h4" stroke="#ddd"/></svg></button>
        </div>
      </div>
    </div>`;
  }
}

@customElement("task-bar")
export class TaskBar extends LitElement {
  static styles = css`
    :host { display: flex; position: relative; height: 33px; box-sizing: border-box; border-top: 1px solid #5d7186; color: #fff; font: 10px/14px "Open Sans", "Noto Sans", sans-serif;
      background: linear-gradient(90deg, #1b5f9c, #2a7fb8 5%, #2f8ac6 11%, #59acd8 19%, #45a3d6 26%, #3b98d0 34%, #2a84c4 46%, #2a7cc6 55%, #2166ad 66%, #1c63ad 80%, #235a9c 88%, #1a4579 92%, #153964); }
    .glow { position: absolute; inset: 0; width: 100%; height: 100%; }
    button { font: inherit; color: inherit; border: 0; background: none; padding: 0; position: relative; display: flex; align-items: center; justify-content: center; flex: none; }
    .ic { display: block; }
    .start { width: 45px; margin-right: 4px; } .app { width: 50px; }
    .run { width: 45px; height: 32px; border: 1px solid #24506f; box-shadow: inset 0 0 0 1px #cfeaf8; background: linear-gradient(#86c1e0aa, #5aaedb88); border-radius: 2px; margin-left: 4px; box-sizing: border-box; }
    .stack { width: 4px; height: 32px; border: solid #d9eef9; border-width: 1px 1px 1px 0; box-sizing: border-box; position: relative; }
    .active { width: 49px; background: linear-gradient(100deg, #eef8fd, #a5d6ee 60%, #bfe3f4); }
    .fill { flex: 1; }
    .tray, .up { width: 20px; }
    .clock { width: 60px; flex-direction: column; margin-left: 2px; }
    .peek { width: 12px; height: 32px; border: 1px solid #7e9ab8; background: linear-gradient(#4d7196, #1d416b); box-sizing: border-box; }
  `;
  render() {
    return html`
      <svg class="glow" viewBox="0 0 1600 33" preserveAspectRatio="none" aria-hidden="true"><path d="M300 22Q420 0 560 10Q480 16 445 33H300z" fill="#7cc4ea" opacity=".2"/><path d="M460 33Q560 0 680 0H530Q420 10 300 33z" fill="#8fd0f0" opacity=".12"/><path d="M1090 0h18q20 14 34 33h-20Q1110 12 1090 0z" fill="#b5d8f8" opacity=".35"/><path d="M1095 0h9q20 14 34 33h-11Q1113 12 1095 0z" fill="#b5d8f8" opacity=".75"/><path d="M0 33L60 0h20L30 33zM90 33l30-33h26l-40 33z" fill="#9fd4ee" opacity=".14"/></svg>
      <button class="start" aria-label="Start"><svg class="ic" width="32" height="32" viewBox="0 0 32 32"><defs><radialGradient id="orb" cy=".85"><stop offset="0" stop-color="#35c8f4"/><stop offset=".5" stop-color="#1d6ea6"/><stop offset="1" stop-color="#23486c"/></radialGradient></defs><circle cx="16" cy="16" r="15" fill="url(#orb)" stroke="#6d9cc0"/><path d="M3 13a13 13 0 0 1 26 0q-13-5-26 0z" fill="#fff" opacity=".3"/><path d="M9 8q4-2 7 0l-1.500 7q-3-2-7 0z" fill="#e9562a"/><path d="M17 9q4 2 8 0l-2 7q-4 2-7.500 0z" fill="#93c83e"/><path d="M7 16q4-2 7 0l-1.500 7q-3-2-7 0z" fill="#3fa4e8"/><path d="M15.500 17q3 2 7 0L21 23q-3 2-7 0z" fill="#fbc62d"/></svg></button>
      <button class="app" aria-label="Internet Explorer"><svg class="ic" width="28" height="28" viewBox="0 0 28 28"><path d="M23 18a9.500 9.500 0 1 1 .5-5H10" fill="none" stroke="#c6edfb" stroke-width="6.5"/><path d="M22.500 18a8.500 8.500 0 1 1 .5-4H9" fill="none" stroke="#3bb5ea" stroke-width="4"/><path d="M3 25C-2 17 10 3 25 3c3 1 0 5-1 6 1-3 0-4-2-3C12 8 2 20 3 25z" fill="#f5d245" stroke="#d29f1c" stroke-width=".6"/></svg></button>
      <button class="app" aria-label="File Explorer"><svg class="ic" width="30" height="28" viewBox="0 0 30 28"><path d="M3 4l2-2h6l2 2h12l2 2v19H3z" fill="#f0d98a" stroke="#bd9b44"/><path d="M5 5h5M14 7h9" stroke="#fff" stroke-width="2"/><path d="M5 4h3" stroke="#d33" stroke-width="1.5"/><path d="M3 10h24v14H3z" fill="#f9eab0"/><path d="M6 26v-6q0-3 3-3h12q3 0 3 3v6h-4v-5H10v5z" fill="#a6d8f2" stroke="#5e9fc6"/></svg></button>
      <button class="app" aria-label="Media Player"><svg class="ic" width="24" height="24" viewBox="0 0 24 24"><rect x="7" y="2" width="15" height="18" fill="#8ec3e4" stroke="#5c99c0"/><rect x="4" y="2.5" width="15" height="19" fill="#a8d4ee" stroke="#5c99c0"/><rect x="1.5" y="3" width="15" height="19" fill="#b9dcf0" stroke="#5c99c0"/><circle cx="10" cy="12" r="7.5" fill="#f0731f" stroke="#fbc59a"/><path d="M8 7.500l6 4.500-6 4.500z" fill="#fff"/></svg></button>
      <button class="run" aria-label="Chrome"><svg class="ic" width="26" height="26" viewBox="0 0 26 26"><circle cx="13" cy="13" r="12" fill="#3aa757"/><path d="M2.600 7A12 12 0 0 1 23.400 7H13L8 16z" fill="#e5483b"/><path d="M23.400 7A12 12 0 0 1 13 25l5-9-5-9z" fill="#fbc934"/><circle cx="13" cy="13" r="6" fill="#fff"/><circle cx="13" cy="13" r="4.700" fill="#4285f4"/></svg></button>
      <span class="stack"></span>
      <button class="run active" aria-label="Autodesk Inventor"><svg class="ic" width="27" height="27" viewBox="0 0 27 27"><rect width="27" height="27" fill="#f3a75e"/><path d="M0 27V8L27 0v20z" fill="#e98a35"/><path d="M7 3h13v4h-4v9h4v4H7v-4h4V7H7z" fill="#8d3009"/><text x="9" y="26" font-family="Open Sans, sans-serif" font-size="6" font-weight="700" fill="#fff">PRO</text></svg></button>
      <span class="fill"></span>
      <button class="up" aria-label="Show hidden icons"><svg class="ic" width="8" height="6" viewBox="0 0 8 6"><path d="M1 5l3-4 3 4z" fill="#fff"/></svg></button>
      <button class="tray" aria-label="Action Center"><svg class="ic" width="15" height="15" viewBox="0 0 15 15"><path d="M2 1v13" stroke="#fff" stroke-width="1.5"/><path d="M3 2q3-2 5 0t5 1v5H3z" fill="#fff"/><path d="M9 6l5 8H4z" fill="#f4d51f" stroke="#8a7400" stroke-width=".7"/><path d="M9 9v4" stroke="#222"/></svg></button>
      <button class="tray" aria-label="Network"><svg class="ic" width="15" height="15" viewBox="0 0 15 15"><rect x="4" y="4" width="9" height="7" fill="#2f5480" stroke="#fff" stroke-width="1.3"/><path d="M6 13.5h6" stroke="#fff" stroke-width="1.5"/><path d="M1 2h4v4H1zM3 6v7" fill="#ccc" stroke="#fff"/></svg></button>
      <button class="tray" aria-label="Volume muted"><svg class="ic" width="15" height="15" viewBox="0 0 15 15"><path d="M1 5h3l4-4v12L4 10H1z" fill="#fff"/><circle cx="10" cy="9.5" r="4" fill="#e02020" stroke="#fff" stroke-width=".8"/><path d="M7.500 7l5 5" stroke="#fff" stroke-width="1.5"/></svg></button>
      <button class="clock"><span>9:53 AM</span><span>8/3/2016</span></button>
      <button class="peek" aria-label="Show desktop"></button>`;
  }
}

@customElement("app-root")
export class AppRoot extends LitElement {
  static styles = css`
    :host { display: flex; flex-direction: column; height: 100vh; min-height: 480px; overflow: hidden; background: #fff; font: 10px/14px "Open Sans", "Noto Sans", sans-serif; color: #222; }
    .main { flex: 1; min-height: 0; display: flex; }
    .status { height: 21px; flex: none; display: flex; align-items: center; background: linear-gradient(#fff, #e4e4e4 35%, #b2b2b2); border-bottom: 1px solid #8b8b8b; box-sizing: border-box; padding: 1px 1px 0; }
    .msg { flex: 1; }
    .num { width: 32px; box-sizing: border-box; border-left: 1px solid #fff; padding-left: 7px; height: 18px; line-height: 18px; }
  `;
  render() {
    return html`
      <app-header></app-header>
      <ribbon-bar></ribbon-bar>
      <div class="main"><model-browser></model-browser><part-window></part-window></div>
      <footer class="status"><span class="msg">Ready</span><span class="num">1</span><span class="num">1</span></footer>
      <task-bar></task-bar>`;
  }
}
